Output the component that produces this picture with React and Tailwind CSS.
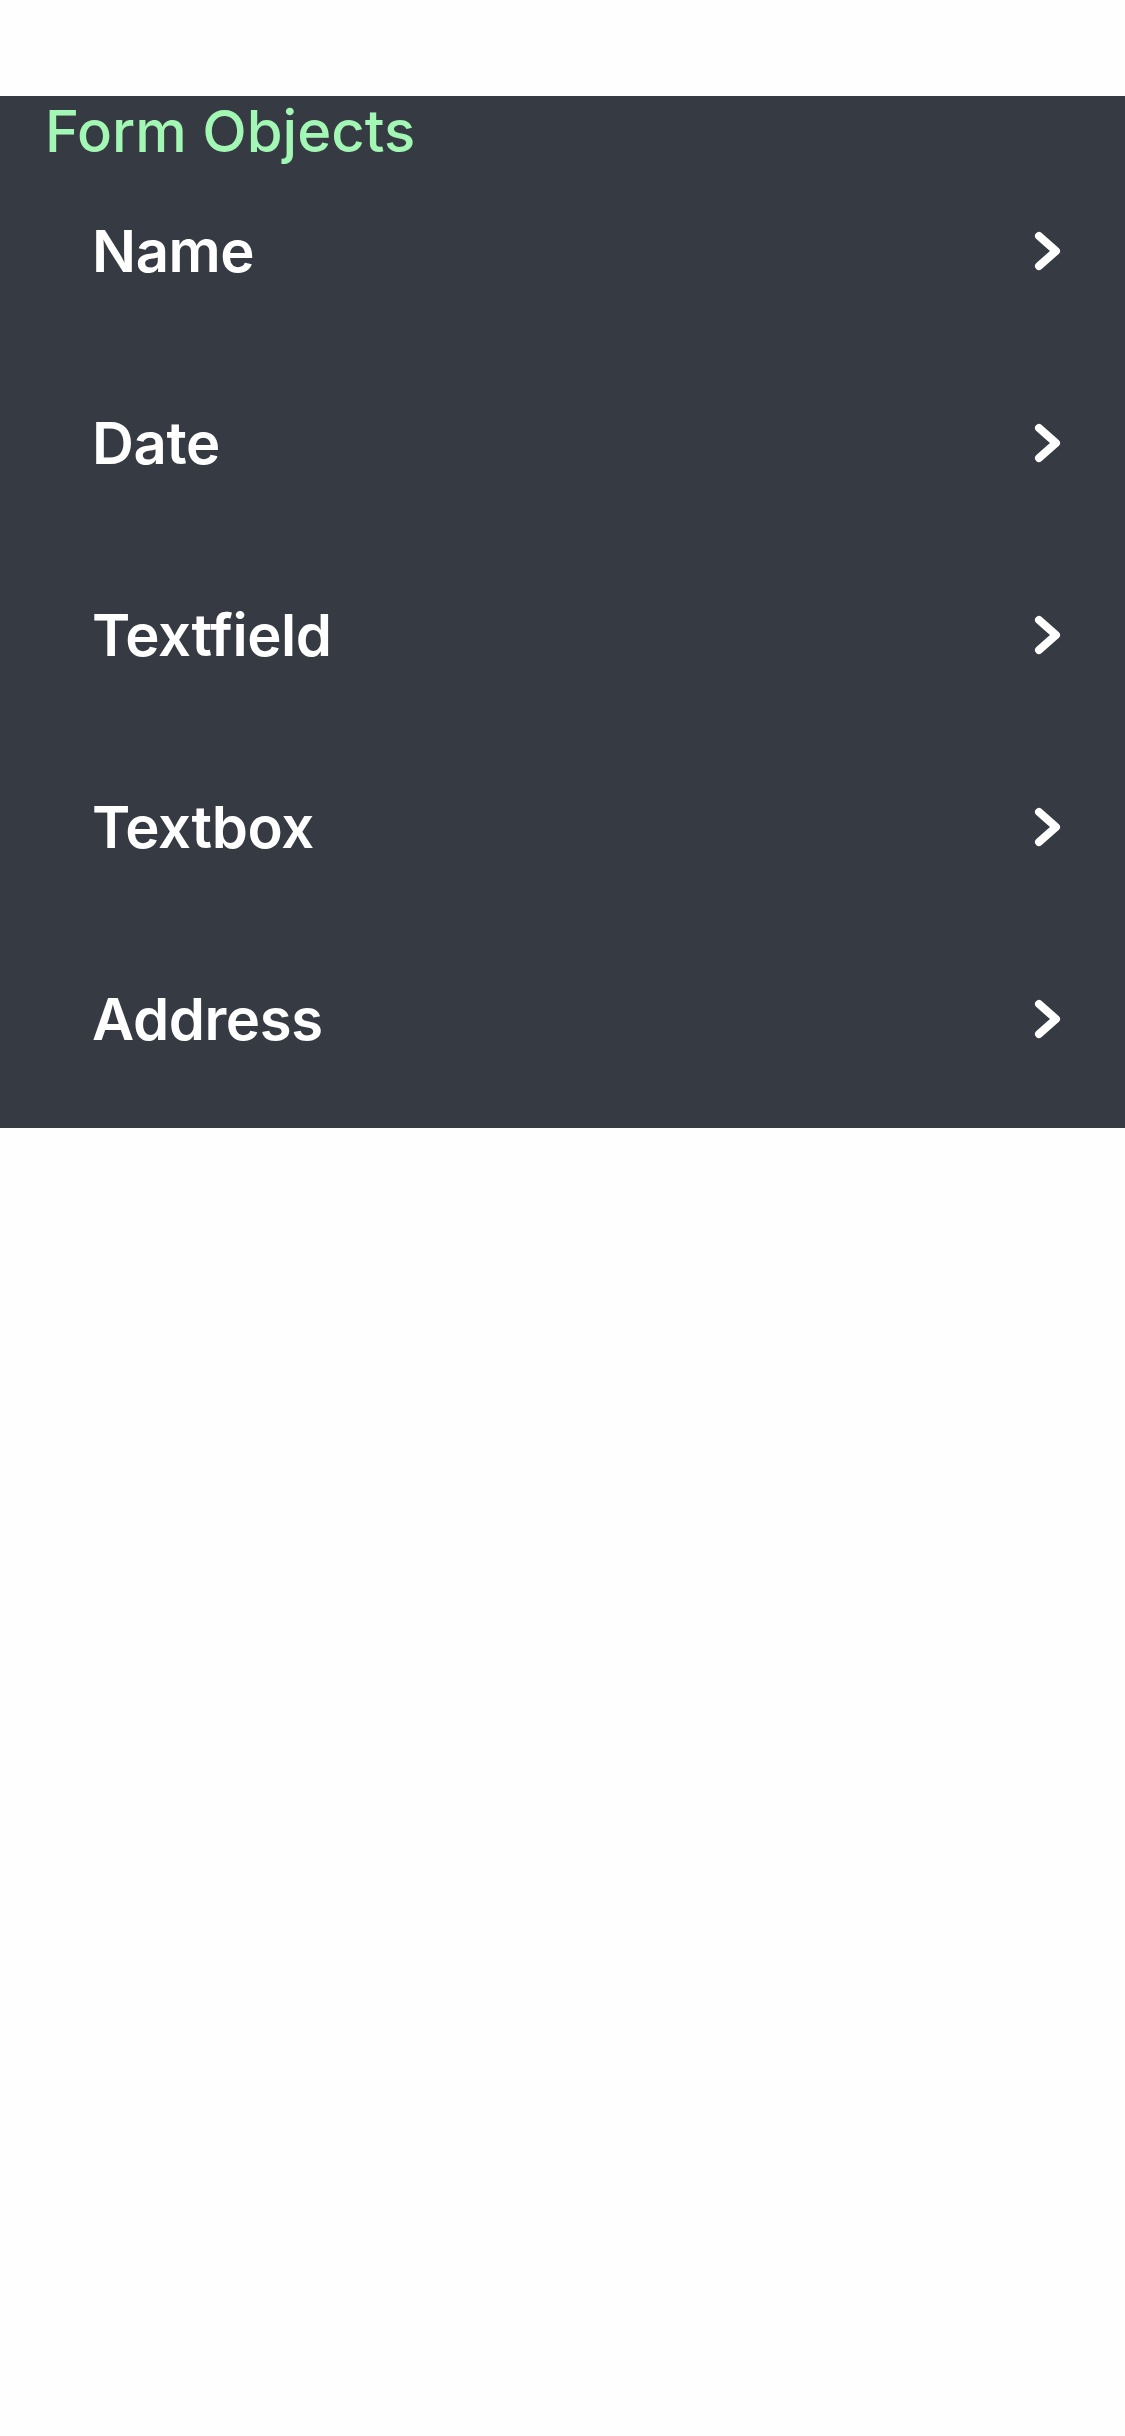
const items = ['Name', 'Date', 'Textfield', 'Textbox', 'Address'];

function Chevron() {
  return (
    <svg width="28" height="40" viewBox="0 0 28 40" fill="none">
      <polyline
        points="5,5 22,20 5,35"
        stroke="white"
        strokeWidth="8"
        strokeLinecap="round"
        strokeLinejoin="round"
      />
    </svg>
  );
}

export default function App() {
  return (
    <div className="min-h-[2436px] w-[1125px] bg-[#fefefe] pt-[96px]" style={{ fontFamily: 'Inter, "Noto Sans", sans-serif' }}>
      <div className="bg-[#363a42] pb-[2px]">
        <h2 className="pl-[45px] text-[58px] font-medium leading-[70px] text-[#a3f7b5]">Form Objects</h2>
        <ul>
          {items.map((item) => (
            <li key={item} className="flex h-[192px] items-start pl-[92px] pr-[63px] pt-[50px]">
              <div className="flex h-[70px] flex-1 items-center justify-between">
                <span className="text-[58px] font-semibold leading-[70px] tracking-[-0.4px] text-white">{item}</span>
                <Chevron />
              </div>
            </li>
          ))}
        </ul>
      </div>
    </div>
  );
}
